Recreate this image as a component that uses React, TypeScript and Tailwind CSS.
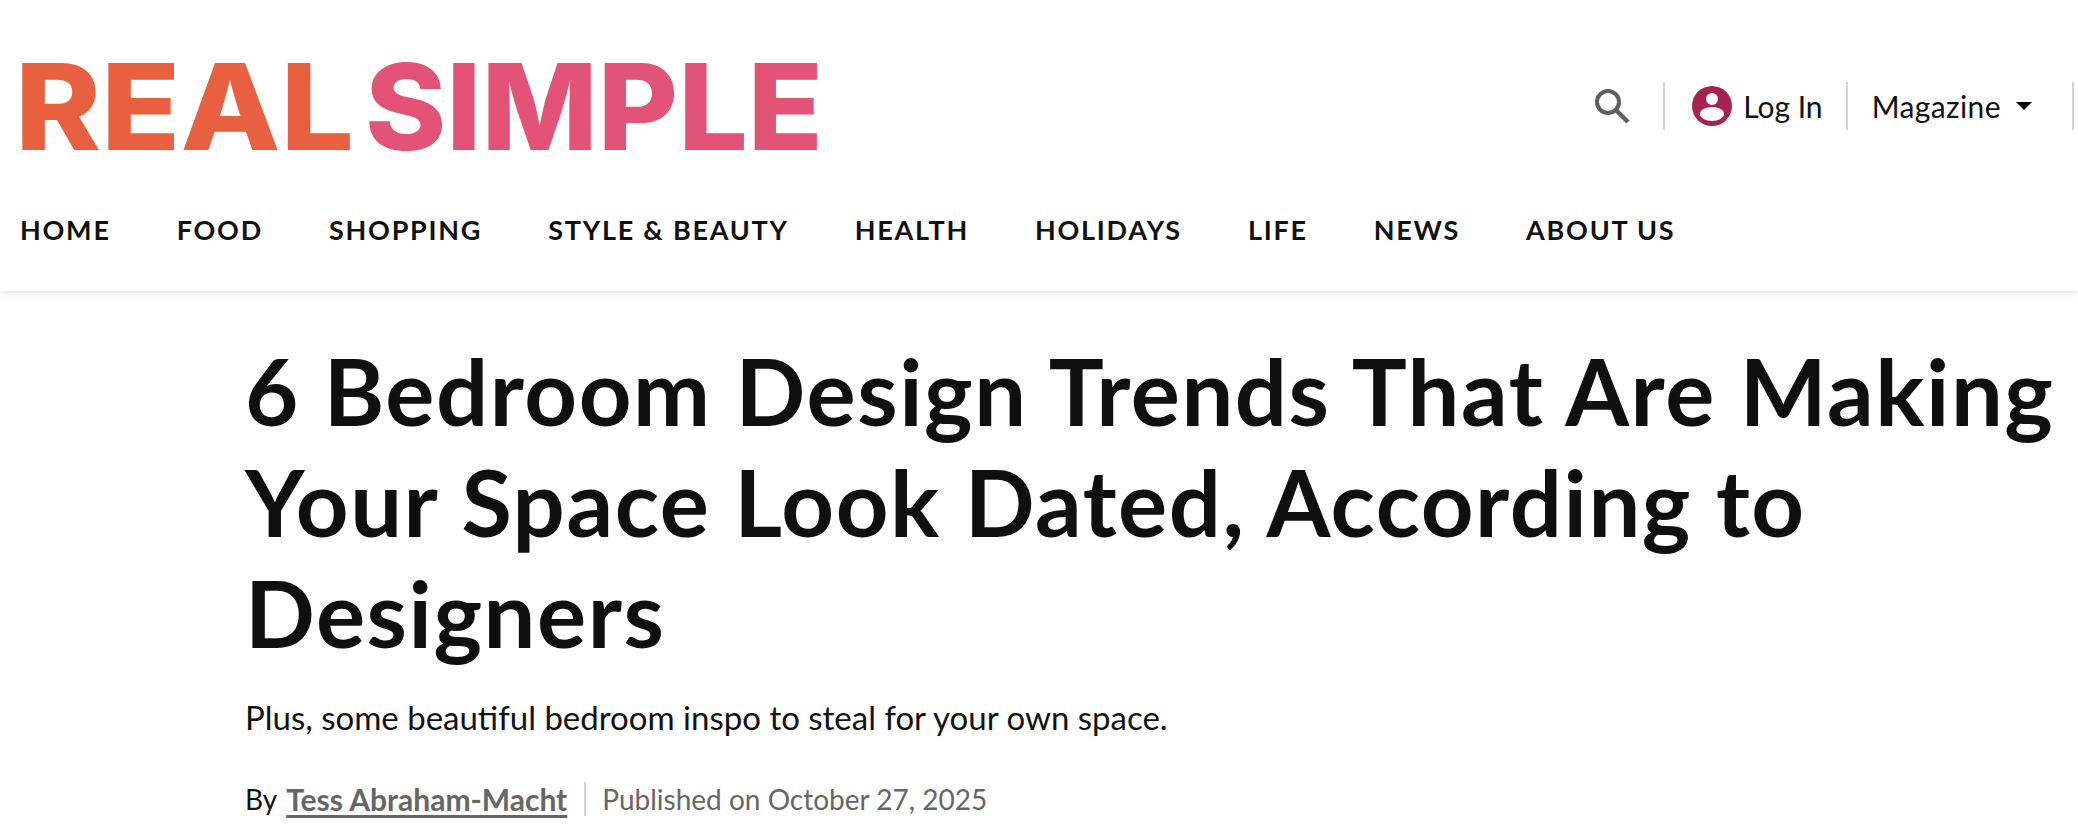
import React from "react";

const navItems = ["HOME", "FOOD", "SHOPPING", "STYLE & BEAUTY", "HEALTH", "HOLIDAYS", "LIFE", "NEWS", "ABOUT US"];

const Logo = () => (
  <svg width="820" height="130" viewBox="0 0 820 130" className="block overflow-visible" fontFamily="Inter, sans-serif" fontWeight="800">
    <text x="0" y="105" fontSize="119" fill="#e8603f" textLength="339" lengthAdjust="spacingAndGlyphs">REAL</text>
    <text x="350" y="105" fontSize="119" fill="#e25375" textLength="458" lengthAdjust="spacingAndGlyphs">SIMPLE</text>
  </svg>
);

const SearchIcon = () => (
  <svg width="38" height="38" viewBox="0 0 38 38" fill="none" stroke="#5f5f5f" strokeWidth="4">
    <circle cx="15" cy="15" r="11" />
    <path d="M23 23l12 12" strokeWidth="4.5" />
  </svg>
);

const UserIcon = () => (
  <svg width="40" height="40" viewBox="0 0 40 40">
    <circle cx="20" cy="20" r="20" fill="#a52350" />
    <circle cx="20" cy="13" r="6" fill="#fff" />
    <ellipse cx="20" cy="28" rx="12" ry="7" fill="#fff" />
  </svg>
);

export default function App() {
  return (
    <div className="min-h-[840px] w-full overflow-hidden bg-white text-[#111] font-['Lato',sans-serif]">
      <header className="h-[291px] shadow-[0_2px_6px_rgba(0,0,0,0.12)]">
        <div className="flex h-[190px] items-start justify-between pl-[15px] pr-[4px]">
          <div className="pt-[45px]">
            <Logo />
          </div>
          <div className="mt-[82px] flex h-[48px] items-center text-[30px]">
            <SearchIcon />
            <div className="ml-[32px] h-[48px] w-[2px] bg-[#d4d4d4]" />
            <div className="ml-[27px]">
              <UserIcon />
            </div>
            <span className="ml-[11px]">Log In</span>
            <div className="ml-[23px] h-[48px] w-[2px] bg-[#d4d4d4]" />
            <span className="ml-[24px] tracking-[0.4px]">Magazine</span>
            <div className="ml-[15px] h-0 w-0 border-x-[8px] border-t-[8px] border-x-transparent border-t-black" />
            <div className="ml-[40px] h-[48px] w-[2px] bg-[#d4d4d4]" />
          </div>
        </div>
        <nav className="flex gap-[66px] pl-[20px] pt-[20px] text-[27px] font-bold tracking-[1.75px]">
          {navItems.map((item) => (
            <a key={item} className="whitespace-nowrap">{item}</a>
          ))}
        </nav>
      </header>
      <main className="pl-[245px] pt-[44px]">
        <h1 className="whitespace-nowrap text-[92px] font-bold leading-[111px] tracking-[1.55px] text-[#0f0f0f]">
          6 Bedroom Design Trends That Are Making
          <br />
          Your Space Look Dated, According to
          <br />
          Designers
        </h1>
        <p className="mt-[29px] text-[33px] leading-[40px]">Plus, some beautiful bedroom inspo to steal for your own space.</p>
        <div className="mt-[44px] flex items-center text-[28px] leading-[36px]">
          <span>By</span>
          <a className="ml-[9px] text-[30px] font-bold text-[#666] underline underline-offset-4">Tess Abraham-Macht</a>
          <div className="ml-[17px] h-[34px] w-[2px] bg-[#d4d4d4]" />
          <span className="ml-[16px] text-[#666]">Published on October 27, 2025</span>
        </div>
      </main>
    </div>
  );
}
